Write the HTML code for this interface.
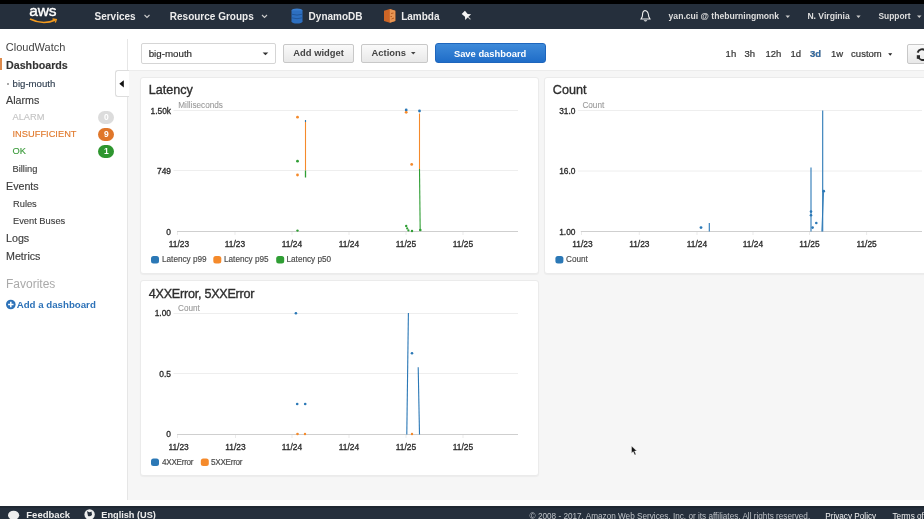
<!DOCTYPE html>
<html><head><meta charset="utf-8">
<style>
html,body{margin:0;padding:0;}
body{width:924px;height:519px;overflow:hidden;position:relative;background:#fff;font-family:"Liberation Sans",sans-serif;filter:blur(0.3px);}
.a{position:absolute;}
.t{position:absolute;white-space:nowrap;line-height:1;}
.b{font-weight:bold;}
#top{left:0;top:0;width:924px;height:4px;background:#000;}
#nav{left:0;top:4px;width:924px;height:25px;background:#252f3c;}
.nv{color:#ececec;font-weight:bold;font-size:10px;top:12px !important;}
.nr{color:#dedede;font-weight:bold;font-size:8.6px;}
#side{left:0;top:29px;width:127px;height:471px;background:#fff;}
#sideline{left:127px;top:39px;width:1px;height:461px;background:#e6e6e6;}
#toolbar{left:128px;top:29px;width:796px;height:41px;background:#fff;}
#content{left:128px;top:70px;width:796px;height:430px;background:#f6f6f6;border-top:1px solid #ececec;box-sizing:border-box;}
#foot{left:0;top:505.5px;width:924px;height:14px;background:#252f3c;border-top:2px solid #1f2832;box-sizing:border-box;}
.card{position:absolute;background:#fff;border:1px solid #ebebeb;border-radius:3px;box-sizing:border-box;box-shadow:0 1px 1px rgba(0,0,0,0.04);}
.sm{font-size:10.7px;color:#3d3d3d;-webkit-text-stroke:0.15px #3d3d3d;}
.ss{font-size:9.3px;color:#3d3d3d;-webkit-text-stroke:0.12px;}
.badge{position:absolute;width:16px;height:12.5px;border-radius:6.5px;color:#fff;font-size:8.5px;font-weight:bold;text-align:center;line-height:12.5px;}
.btn{position:absolute;box-sizing:border-box;border:1px solid #c8c8c8;border-radius:2px;background:linear-gradient(#fafafa,#e8e8e8);height:19px;top:43.5px;}
.bt{font-weight:bold;font-size:9.4px;color:#444;}
.tr{font-size:9.5px;color:#333;-webkit-text-stroke:0.2px #333;top:48.5px !important;margin-left:-0.8px;}
.ttl{font-size:12.6px;color:#2e2e2e;-webkit-text-stroke:0.35px #2e2e2e;}
.unit{font-size:8.2px;color:#9a9a9a;-webkit-text-stroke:0.1px #9a9a9a;}
.yl{font-size:8.4px;color:#2a2a2a;text-align:right;width:30px;-webkit-text-stroke:0.3px #2a2a2a;}
.xl{font-size:8.4px;color:#2a2a2a;width:30px;text-align:center;-webkit-text-stroke:0.3px #2a2a2a;}
.lg{font-size:8.2px;color:#4a4a4a;-webkit-text-stroke:0.15px #4a4a4a;}
</style></head><body>
<div id="top" class="a"></div>
<div id="nav" class="a"></div>
<div id="side" class="a"></div>
<div id="sideline" class="a"></div>
<div id="toolbar" class="a"></div>
<div id="content" class="a"></div>
<div id="foot" class="a"></div>

<!-- nav items -->
<div class="t" style="left:29.3px;top:2.5px;color:#fff;font-size:15.5px;letter-spacing:-0.2px;-webkit-text-stroke:0.4px #fff;">aws</div>
<svg class="a" style="left:0;top:0" width="924" height="29">
  <path d="M30 19 Q43 25.5 55.5 20" stroke="#f49b1f" stroke-width="1.7" fill="none"/>
  <path d="M52.5 19 L56.3 19.6 L55.3 22.5" stroke="#f49b1f" stroke-width="1.3" fill="none"/>
  <path d="M144.5 15 L147 17.5 L149.5 15" stroke="#ccc" stroke-width="1.1" fill="none"/>
  <path d="M262 15 L264.5 17.5 L267 15" stroke="#ccc" stroke-width="1.1" fill="none"/>
  <!-- dynamo icon -->
  <ellipse cx="297" cy="10.5" rx="5.5" ry="2" fill="#3a7fd0"/>
  <rect x="291.5" y="10.5" width="11" height="11" fill="#2d6fc0"/>
  <ellipse cx="297" cy="21.5" rx="5.5" ry="2" fill="#2d6fc0"/>
  <path d="M291.5 14.2 Q297 16 302.5 14.2 M291.5 17.8 Q297 19.6 302.5 17.8" stroke="#1d4f90" stroke-width="0.8" fill="none"/>
  <!-- lambda icon -->
  <path d="M384 10.8 L389.8 9 L395.3 10.8 L395.3 21 L389.8 22.8 L384 21 Z" fill="#cc6526"/>
  <path d="M389.8 9 L395.3 10.8 L395.3 21 L389.8 22.8 Z" fill="#e79552"/>
  <path d="M391 13.5 L393.5 13 M390.5 16.5 L392 16.5 M391.5 19 L394 18" stroke="#b85a20" stroke-width="1"/>
  <!-- pin -->
  <g transform="translate(467.2 16.2) rotate(-45)"><path d="M-2.3 -5.5 H2.3 L1.9 -1.2 L4.2 1.3 H-4.2 L-1.9 -1.2 Z" fill="#f4f4f4"/><path d="M0 1.3 V4.6" stroke="#ccc" stroke-width="1"/></g>
  <!-- bell -->
  <path d="M641 19 L641.5 18 Q642.5 17 642.5 15 Q642.5 11 645 10.5 Q648 11 648.5 15 Q648.5 17 649.5 18 L650 19 Z" stroke="#eee" stroke-width="1.1" fill="none"/>
  <path d="M643.6 20.2 Q645.5 23 647.4 20.2 Z" fill="#eee"/>
  <path d="M785.5 15.5 L790 15.5 L787.75 18 Z" fill="#ccc"/>
  <path d="M856.3 15.5 L860.6 15.5 L858.45 18 Z" fill="#ccc"/>
  <path d="M917 15.5 L921.5 15.5 L919.25 18 Z" fill="#ccc"/>
</svg>
<div class="t nv" style="left:94.5px;top:11px;">Services</div>
<div class="t nv" style="left:169.8px;top:11px;">Resource Groups</div>
<div class="t nv" style="left:308.6px;top:11px;">DynamoDB</div>
<div class="t nv" style="left:401.2px;top:11px;">Lambda</div>
<div class="t nr" style="left:668.6px;top:12px;">yan.cui @ theburningmonk</div>
<div class="t nr" style="left:807.4px;top:12px;">N. Virginia</div>
<div class="t nr" style="left:878.5px;top:12px;font-size:8.4px;">Support</div>

<!-- sidebar -->
<div class="a" style="left:0;top:58px;width:1.5px;height:12px;background:#dd8a4c;"></div>
<div class="t" style="left:5.8px;top:41.5px;font-size:11px;color:#444;">CloudWatch</div>
<div class="t sm b" style="left:6px;top:59.7px;color:#333;">Dashboards</div>
<div class="a" style="left:6.5px;top:82.5px;width:2px;height:2px;background:#aaa;"></div>
<div class="t ss" style="left:12.6px;top:78.7px;font-size:9.6px;color:#2b3a4c;">big-mouth</div>
<div class="t sm" style="left:6px;top:94.8px;">Alarms</div>
<div class="t ss" style="left:12.5px;top:113px;color:#c4c4c4;">ALARM</div>
<div class="t ss" style="left:12.5px;top:129.6px;color:#e0782a;">INSUFFICIENT</div>
<div class="t ss" style="left:12.5px;top:146.5px;color:#3a9a3a;">OK</div>
<div class="t ss" style="left:12.5px;top:164.5px;">Billing</div>
<div class="badge" style="left:98.3px;top:111px;height:13px;background:#dcdcdc;">0</div>
<div class="badge" style="left:98.3px;top:128px;background:#e0762a;">9</div>
<div class="badge" style="left:98.3px;top:145.2px;background:#2e962f;">1</div>
<div class="t sm" style="left:6px;top:181px;">Events</div>
<div class="t ss" style="left:13px;top:199.5px;">Rules</div>
<div class="t ss" style="left:13px;top:216.5px;">Event Buses</div>
<div class="t sm" style="left:6px;top:232.5px;">Logs</div>
<div class="t sm" style="left:6px;top:250.5px;">Metrics</div>
<div class="t" style="left:6px;top:277.8px;font-size:12px;color:#aaa;">Favorites</div>
<svg class="a" style="left:0;top:295.8px" width="20" height="16">
  <circle cx="10.8" cy="8.5" r="4.8" fill="#2d72b8"/>
  <path d="M10.8 5.8 V11.2 M8.1 8.5 H13.5" stroke="#fff" stroke-width="1.5"/>
</svg>
<div class="t b" style="left:16.7px;top:299.8px;font-size:9.7px;color:#2d72b8;">Add a dashboard</div>

<!-- collapse tab -->
<div class="a" style="left:114.5px;top:70px;width:14px;height:27px;background:#fff;border:1px solid #ddd;border-right:none;border-radius:3px 0 0 3px;box-sizing:border-box;"></div>
<svg class="a" style="left:114px;top:70px" width="15" height="28"><path d="M5.3 13.8 L9.8 10.2 L9.8 17.6 Z" fill="#111"/></svg>

<!-- toolbar -->
<div class="a" style="left:141px;top:43px;width:135px;height:20.5px;box-sizing:border-box;border:1px solid #d5d5d5;border-radius:2px;background:#fff;"></div>
<div class="t" style="left:148.7px;top:48.7px;font-size:9.75px;color:#2a2a2a;-webkit-text-stroke:0.15px #2a2a2a;">big-mouth</div>
<svg class="a" style="left:255px;top:45px" width="20" height="16"><path d="M7.6 7.4 L13.3 7.4 L10.45 10.3 Z" fill="#333"/></svg>
<div class="btn" style="left:283.3px;width:71px;"></div>
<div class="t bt" style="left:293.3px;top:48.2px;">Add widget</div>
<div class="btn" style="left:361.2px;width:66.8px;"></div>
<div class="t bt" style="left:371.6px;top:48.2px;">Actions</div>
<svg class="a" style="left:405px;top:45px" width="20" height="16"><path d="M6 7 L10.5 7 L8.25 9.6 Z" fill="#444"/></svg>
<div class="a" style="left:434.7px;top:43px;width:111.2px;height:20.3px;box-sizing:border-box;border:1px solid #1e66bd;border-radius:3px;background:linear-gradient(#3e8ad9,#1f6dc8);"></div>
<div class="t bt" style="left:453.9px;top:48.5px;color:#fff;">Save dashboard</div>
<div class="t tr" style="left:726.4px;top:49.5px;">1h</div>
<div class="t tr" style="left:745.2px;top:49.5px;">3h</div>
<div class="t tr" style="left:766.2px;top:49.5px;">12h</div>
<div class="t tr" style="left:791.3px;top:49.5px;">1d</div>
<div class="t tr b" style="left:810.8px;top:49.5px;color:#2d72b8;">3d</div>
<div class="t tr" style="left:831.8px;top:49.5px;">1w</div>
<div class="t tr" style="left:851.9px;top:49.5px;">custom</div>
<svg class="a" style="left:880px;top:45px" width="20" height="16"><path d="M8.2 8.2 L12.2 8.2 L10.2 10.8 Z" fill="#222"/></svg>
<div class="btn" style="left:907px;width:30px;top:43.5px;height:20.2px;"></div>
<svg class="a" style="left:907px;top:43px" width="17" height="21"><path d="M10.6 9.6 A4.8 4.8 0 0 1 18.5 7.6" stroke="#2a2a2a" stroke-width="1.9" fill="none"/><path d="M11.3 14 A4.8 4.8 0 0 0 18.5 16.2" stroke="#2a2a2a" stroke-width="1.9" fill="none"/><path d="M9.8 12.2 L13 12.2 L13 15.8 L9.8 15.8 Z" fill="#2a2a2a"/></svg>

<!-- cards -->
<div class="card" style="left:140px;top:77px;width:399px;height:196.5px;"></div>
<div class="card" style="left:544px;top:77px;width:390px;height:196.5px;"></div>
<div class="card" style="left:140px;top:280px;width:399px;height:195.5px;"></div>

<div class="t ttl" style="left:148.8px;top:84.4px;">Latency</div>
<div class="t ttl" style="left:552.8px;top:84.4px;">Count</div>
<div class="t ttl" style="left:148.8px;top:287.7px;letter-spacing:-0.25px;">4XXError, 5XXError</div>

<div class="t unit" style="left:178.3px;top:102.3px;">Milliseconds</div>
<div class="t unit" style="left:582.4px;top:102.3px;">Count</div>
<div class="t unit" style="left:178px;top:305.3px;">Count</div>

<div class="t yl" style="left:141px;top:106.5px;">1.50k</div>
<div class="t yl" style="left:141px;top:166.5px;">749</div>
<div class="t yl" style="left:141px;top:227.5px;">0</div>
<div class="t yl" style="left:545.5px;top:106.5px;">31.0</div>
<div class="t yl" style="left:545.5px;top:167px;">16.0</div>
<div class="t yl" style="left:545.5px;top:227.5px;">1.00</div>
<div class="t yl" style="left:141px;top:309px;">1.00</div>
<div class="t yl" style="left:141px;top:369.5px;">0.5</div>
<div class="t yl" style="left:141px;top:430px;">0</div>

<!-- x labels -->
<div class="t xl" style="left:164px;top:239.7px;">11/23</div>
<div class="t xl" style="left:220px;top:239.7px;">11/23</div>
<div class="t xl" style="left:277px;top:239.7px;">11/24</div>
<div class="t xl" style="left:334px;top:239.7px;">11/24</div>
<div class="t xl" style="left:391px;top:239.7px;">11/25</div>
<div class="t xl" style="left:448px;top:239.7px;">11/25</div>

<div class="t xl" style="left:567.5px;top:239.7px;">11/23</div>
<div class="t xl" style="left:624.3px;top:239.7px;">11/23</div>
<div class="t xl" style="left:682px;top:239.7px;">11/24</div>
<div class="t xl" style="left:738px;top:239.7px;">11/24</div>
<div class="t xl" style="left:794.5px;top:239.7px;">11/25</div>
<div class="t xl" style="left:851.6px;top:239.7px;">11/25</div>

<div class="t xl" style="left:163.6px;top:442.8px;">11/23</div>
<div class="t xl" style="left:220.5px;top:442.8px;">11/23</div>
<div class="t xl" style="left:277px;top:442.8px;">11/24</div>
<div class="t xl" style="left:334px;top:442.8px;">11/24</div>
<div class="t xl" style="left:391px;top:442.8px;">11/25</div>
<div class="t xl" style="left:448px;top:442.8px;">11/25</div>

<!-- legends -->
<div class="t lg" style="left:162px;top:255.5px;">Latency p99</div>
<div class="t lg" style="left:224px;top:255.5px;">Latency p95</div>
<div class="t lg" style="left:286.5px;top:255.5px;">Latency p50</div>
<div class="t lg" style="left:566px;top:255.5px;">Count</div>
<div class="t lg" style="left:162px;top:459px;letter-spacing:-0.3px;">4XXError</div>
<div class="t lg" style="left:211px;top:459px;letter-spacing:-0.3px;">5XXError</div>

<svg class="a" style="left:0;top:0" width="924" height="519">
  <g fill="none" stroke-width="1">
    <path d="M173.5 110.5 H518 M173.5 170.5 H518" stroke="#eeeeee"/>
    <path d="M177 231.5 H518" stroke="#cfcfcf"/>
    <path d="M578 110.5 H922 M578 171 H922" stroke="#eeeeee"/>
    <path d="M580.8 231.5 H922" stroke="#cfcfcf"/>
    <path d="M173.5 313.5 H518 M173.5 373.5 H518" stroke="#eeeeee"/>
    <path d="M177 434.5 H518" stroke="#cfcfcf"/>
    <path d="M177.5 232 V235 M235 232 V235 M292 232 V235 M349 232 V235 M406 232 V235 M463 232 V235 M581.5 232 V235 M639.3 232 V235 M697 232 V235 M753 232 V235 M809.5 232 V235 M866.6 232 V235 M177.5 435 V438 M235.5 435 V438 M292 435 V438 M349 435 V438 M406 435 V438 M463 435 V438" stroke="#ebebeb"/>
  </g>
  <!-- legend squares -->
  <rect x="151" y="256" width="8" height="7.5" rx="2.5" fill="#2b78b6"/>
  <rect x="213.3" y="256" width="8" height="7.5" rx="2.5" fill="#f58a2b"/>
  <rect x="276.2" y="256" width="8" height="7.5" rx="2.5" fill="#2f9e34"/>
  <rect x="555.4" y="256" width="8" height="7.5" rx="2.5" fill="#2b78b6"/>
  <rect x="151" y="458.5" width="8" height="7.5" rx="2.5" fill="#2b78b6"/>
  <rect x="200.8" y="458.5" width="8" height="7.5" rx="2.5" fill="#f58a2b"/>

  <!-- latency data -->
  <g>
    <circle cx="297.5" cy="117.2" r="1.4" fill="#f58a2b"/>
    <circle cx="297.5" cy="175" r="1.4" fill="#f58a2b"/>
    <circle cx="297.5" cy="161.2" r="1.4" fill="#2f9e34"/>
    <circle cx="297.5" cy="230.6" r="1.2" fill="#2f9e34"/>
    <path d="M305.5 120 V170.5" stroke="#f58a2b" stroke-width="1.1"/>
    <path d="M305.5 120 V122" stroke="#2b78b6" stroke-width="1.1"/>
    <path d="M305.5 170.5 V177.5" stroke="#2f9e34" stroke-width="1.3"/>
    <circle cx="406.2" cy="110" r="1.4" fill="#2b78b6"/>
    <circle cx="406.2" cy="112.3" r="1.4" fill="#f58a2b"/>
    <circle cx="419.5" cy="111" r="1.4" fill="#2b78b6"/>
    <path d="M419.5 113.5 V169" stroke="#f58a2b" stroke-width="1.1"/>
    <path d="M419.5 169 L420.2 231" stroke="#2f9e34" stroke-width="1.1"/>
    <circle cx="411.7" cy="164.4" r="1.4" fill="#f58a2b"/>
    <circle cx="406.2" cy="226" r="1.2" fill="#2f9e34"/>
    <circle cx="407.2" cy="228.4" r="1.1" fill="#2f9e34"/>
    <circle cx="408.4" cy="230.4" r="1.1" fill="#2f9e34"/>
    <circle cx="412" cy="231" r="1.2" fill="#2f9e34"/>
    <circle cx="420.3" cy="230" r="1.3" fill="#2f9e34"/>
  </g>
  <!-- count data -->
  <g fill="#2b78b6" stroke="#2b78b6">
    <circle cx="701" cy="227.6" r="1.4" stroke="none"/>
    <path d="M709.3 223 V231.5" stroke-width="1.1"/>
    <path d="M811 167.5 V231.5" stroke-width="1.1"/>
    <circle cx="811" cy="211.6" r="1.3" stroke="none"/>
    <circle cx="811" cy="215.3" r="1.3" stroke="none"/>
    <circle cx="812.6" cy="227.6" r="1.3" stroke="none"/>
    <circle cx="816.3" cy="223" r="1.3" stroke="none"/>
    <path d="M822.7 110.5 V231.5" stroke-width="1.1" fill="none"/><path d="M823.6 192 L821.8 231.5" stroke-width="0.9" fill="none"/>
    <circle cx="823.7" cy="191.2" r="1.4" stroke="none"/>
  </g>
  <!-- error data -->
  <g>
    <circle cx="295.9" cy="313.3" r="1.3" fill="#2b78b6"/>
    <circle cx="297.2" cy="404" r="1.3" fill="#2b78b6"/>
    <circle cx="305.2" cy="404" r="1.3" fill="#2b78b6"/>
    <circle cx="412" cy="353.3" r="1.3" fill="#2b78b6"/>
    <circle cx="297.5" cy="434" r="1.3" fill="#f58a2b"/>
    <circle cx="305" cy="434" r="1.2" fill="#f58a2b"/>
    <circle cx="412" cy="434" r="1.2" fill="#f58a2b"/>
    <path d="M408.4 313 L406.8 434.5" stroke="#2b78b6" stroke-width="1.1"/>
    <path d="M418.2 367.2 L419.5 434.5" stroke="#2b78b6" stroke-width="1.1"/>
  </g>
  <path d="M631.5 446 L631.5 453.2 L633.2 451.6 L634.7 455 L636 454.4 L634.5 451.1 L636.8 451 Z" fill="#111" stroke="#fff" stroke-width="0.4"/>
  <!-- footer icons -->
  <ellipse cx="13.6" cy="515.3" rx="5.6" ry="4.6" fill="#eee"/>
  <circle cx="89.6" cy="514.5" r="5.2" fill="#eee"/>
  <path d="M87 511 Q89 513 91.5 511.5 L92 515 Q90 517 88 516 Z" fill="#252f3c"/>
</svg>

<!-- footer -->
<div class="t b" style="left:26.3px;top:510.3px;font-size:9.5px;color:#eee;">Feedback</div>
<div class="t b" style="left:101.3px;top:510.5px;font-size:9.2px;color:#eee;">English (US)</div>
<div class="t" style="left:529.6px;top:513px;font-size:8.2px;color:#bfc3c8;">© 2008 - 2017, Amazon Web Services, Inc. or its affiliates. All rights reserved.</div>
<div class="t" style="left:825.2px;top:513px;font-size:8.2px;color:#f2f2f2;">Privacy Policy</div>
<div class="t" style="left:892.5px;top:513px;font-size:8.2px;color:#f2f2f2;">Terms of Use</div>
</body></html>
